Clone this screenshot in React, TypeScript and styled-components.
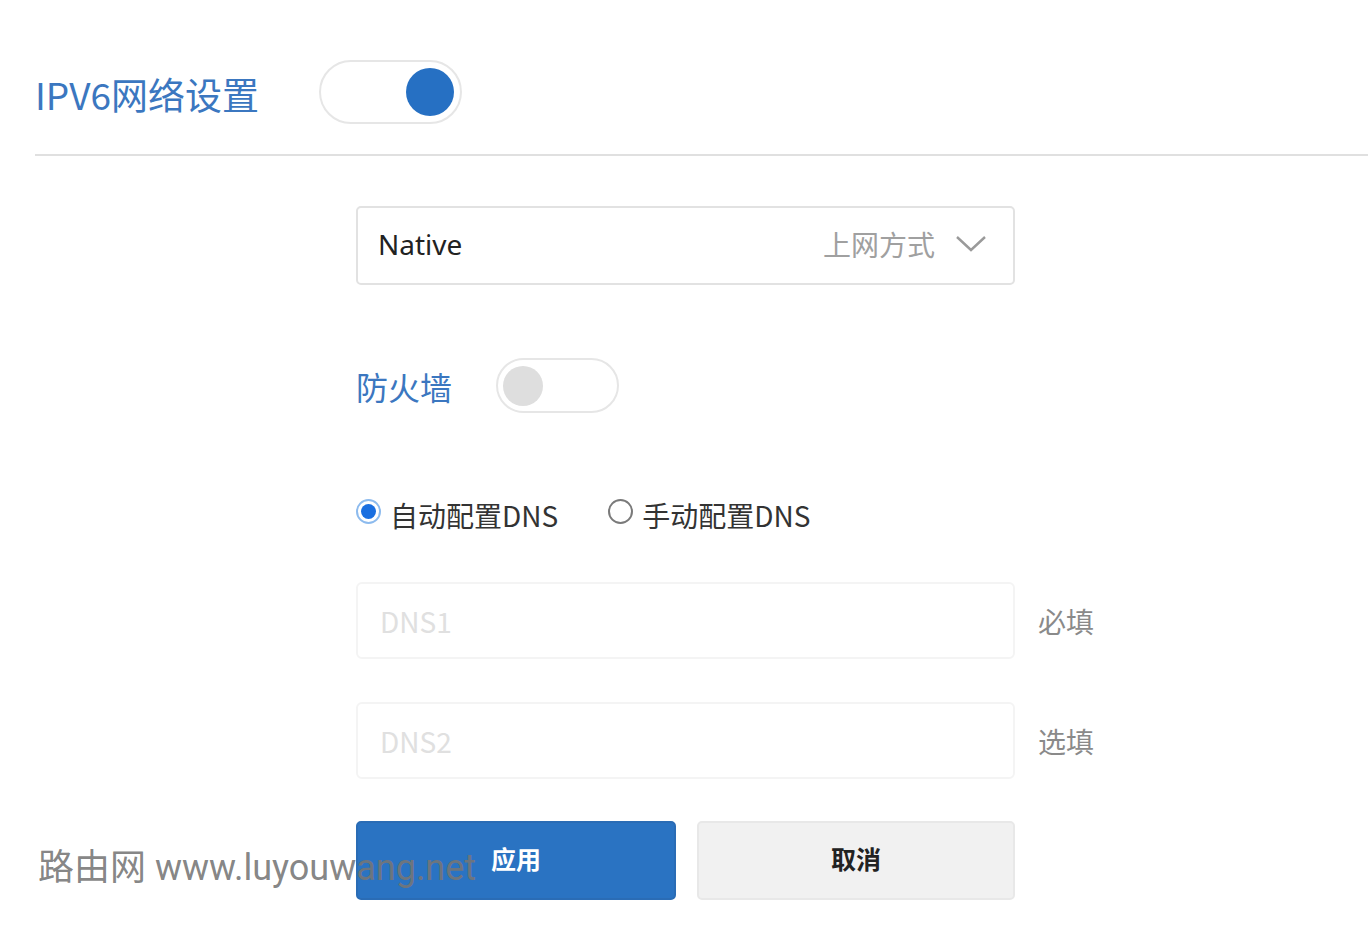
import React, { useState } from "react";
import styled, { createGlobalStyle } from "styled-components";

const GlobalStyle = createGlobalStyle`
  html, body {
    margin: 0;
    padding: 0;
    background: #ffffff;
  }
  body {
    font-family: "Noto Sans CJK SC", "Noto Sans", sans-serif;
    color: #333;
  }
`;

const Page = styled.div`
  position: relative;
  width: 1368px;
  height: 936px;
  overflow: hidden;
  padding-left: 35px;
  box-sizing: border-box;
`;

const Header = styled.div`
  display: flex;
  align-items: center;
  gap: 60px;
  padding-top: 60px;
  height: 64px;
`;

const Title = styled.h1`
  margin: 0;
  font-size: 37px;
  font-weight: 400;
  color: #3b77c0;
  line-height: 1;
  padding-top: 4px;
  letter-spacing: 0;
`;

const SwitchTrack = styled.button<{ $on: boolean; $w: number; $h: number }>`
  display: flex;
  align-items: center;
  justify-content: ${(p) => (p.$on ? "flex-end" : "flex-start")};
  width: ${(p) => p.$w}px;
  height: ${(p) => p.$h}px;
  padding: 0 ${(p) => Math.round(p.$h * 0.09)}px;
  box-sizing: border-box;
  border: 2px solid #e6e6e6;
  border-radius: ${(p) => p.$h / 2}px;
  background: #fff;
  cursor: pointer;
`;

const SwitchKnob = styled.span<{ $on: boolean; $size: number }>`
  width: ${(p) => p.$size}px;
  height: ${(p) => p.$size}px;
  border-radius: 50%;
  background: ${(p) => (p.$on ? "#2670c3" : "#dedede")};
`;

const Divider = styled.div`
  height: 2px;
  background: #e0e0e0;
  margin-top: 30px;
`;

const Form = styled.div`
  display: flex;
  flex-direction: column;
  padding-left: 321px;
`;

const SelectBox = styled.div`
  display: flex;
  align-items: center;
  width: 659px;
  height: 79px;
  box-sizing: border-box;
  margin-top: 50px;
  padding: 0 26px 4px 20px;
  border: 2px solid #e2e2e2;
  border-radius: 5px;
`;

const SelectValue = styled.span`
  flex: 1;
  font-size: 28px;
  color: #222;
  font-family: "Noto Sans", "Noto Sans CJK SC", sans-serif;
`;

const SelectHint = styled.span`
  font-size: 28px;
  color: #a0a0a0;
  margin-right: 20px;
`;

const FirewallRow = styled.div`
  display: flex;
  align-items: center;
  gap: 44px;
  margin-top: 73px;
`;

const FieldLabel = styled.span`
  font-size: 32px;
  color: #3b77c0;
`;

const RadioRow = styled.div`
  display: flex;
  align-items: center;
  gap: 50px;
  margin-top: 82px;
`;

const RadioOption = styled.label`
  display: flex;
  align-items: center;
  gap: 9px;
  font-size: 28px;
  color: #333;
  cursor: pointer;
`;

const RadioDot = styled.span<{ $checked: boolean }>`
  width: 25px;
  height: 25px;
  margin-top: -8px;
  box-sizing: border-box;
  border-radius: 50%;
  border: ${(p) => (p.$checked ? "2px solid #8dbbee" : "2px solid #7a7a7a")};
  background: #fff;
  display: flex;
  align-items: center;
  justify-content: center;

  &::after {
    content: "";
    display: ${(p) => (p.$checked ? "block" : "none")};
    width: 15px;
    height: 15px;
    border-radius: 50%;
    background: #1a6fe0;
  }
`;

const InputRow = styled.div<{ $top: number }>`
  display: flex;
  align-items: center;
  gap: 23px;
  margin-top: ${(p) => p.$top}px;
`;

const TextInput = styled.input`
  width: 659px;
  height: 77px;
  box-sizing: border-box;
  padding: 0 22px;
  border: 2px solid #f4f4f4;
  border-radius: 6px;
  font-size: 28px;
  font-family: "Noto Sans CJK SC", sans-serif;
  color: #333;
  outline: none;

  &::placeholder {
    color: #e0e0e0;
  }
`;

const InputHint = styled.span`
  font-size: 28px;
  color: #8a8a8a;
`;

const ButtonRow = styled.div`
  display: flex;
  gap: 21px;
  margin-top: 42px;
`;

const ActionButton = styled.button<{ $primary?: boolean }>`
  width: ${(p) => (p.$primary ? 320 : 318)}px;
  height: 79px;
  border-radius: 5px;
  font-size: 25px;
  font-weight: 700;
  font-family: "Noto Sans CJK SC", sans-serif;
  cursor: pointer;
  padding-bottom: 6px;
  background: ${(p) => (p.$primary ? "#2a73c2" : "#f1f1f1")};
  color: ${(p) => (p.$primary ? "#fff" : "#222")};
  border: 2px solid ${(p) => (p.$primary ? "#2a6cb5" : "#e8e8e8")};
`;

const Watermark = styled.div`
  position: absolute;
  left: 38px;
  top: 838px;
  font-size: 36px;
  color: rgba(118, 118, 118, 0.9);
  font-family: Roboto, "Noto Sans CJK SC", sans-serif;
  pointer-events: none;
  white-space: nowrap;
`;

const Toggle: React.FC<{ on: boolean; w: number; h: number; knob: number; onClick: () => void }> = ({
  on,
  w,
  h,
  knob,
  onClick,
}) => (
  <SwitchTrack $on={on} $w={w} $h={h} onClick={onClick}>
    <SwitchKnob $on={on} $size={knob} />
  </SwitchTrack>
);

const Chevron = () => (
  <svg width="32" height="18" viewBox="0 0 32 18">
    <path d="M2 2 L16 15 L30 2" fill="none" stroke="#9a9a9a" strokeWidth="2.4" />
  </svg>
);

export default function App() {
  const [ipv6, setIpv6] = useState(true);
  const [firewall, setFirewall] = useState(false);
  const [dnsMode, setDnsMode] = useState<"auto" | "manual">("auto");

  return (
    <>
      <GlobalStyle />
      <Page>
        <Header>
          <Title>IPV6网络设置</Title>
          <Toggle on={ipv6} w={143} h={64} knob={48} onClick={() => setIpv6(!ipv6)} />
        </Header>
        <Divider />

        <Form>
          <SelectBox>
            <SelectValue>Native</SelectValue>
            <SelectHint>上网方式</SelectHint>
            <Chevron />
          </SelectBox>

          <FirewallRow>
            <FieldLabel>防火墙</FieldLabel>
            <Toggle on={firewall} w={123} h={55} knob={40} onClick={() => setFirewall(!firewall)} />
          </FirewallRow>

          <RadioRow>
            <RadioOption onClick={() => setDnsMode("auto")}>
              <RadioDot $checked={dnsMode === "auto"} />
              自动配置DNS
            </RadioOption>
            <RadioOption onClick={() => setDnsMode("manual")}>
              <RadioDot $checked={dnsMode === "manual"} />
              手动配置DNS
            </RadioOption>
          </RadioRow>

          <InputRow $top={47}>
            <TextInput placeholder="DNS1" />
            <InputHint>必填</InputHint>
          </InputRow>
          <InputRow $top={43}>
            <TextInput placeholder="DNS2" />
            <InputHint>选填</InputHint>
          </InputRow>

          <ButtonRow>
            <ActionButton $primary>应用</ActionButton>
            <ActionButton>取消</ActionButton>
          </ButtonRow>
        </Form>

        <Watermark>路由网 www.luyouwang.net</Watermark>
      </Page>
    </>
  );
}
